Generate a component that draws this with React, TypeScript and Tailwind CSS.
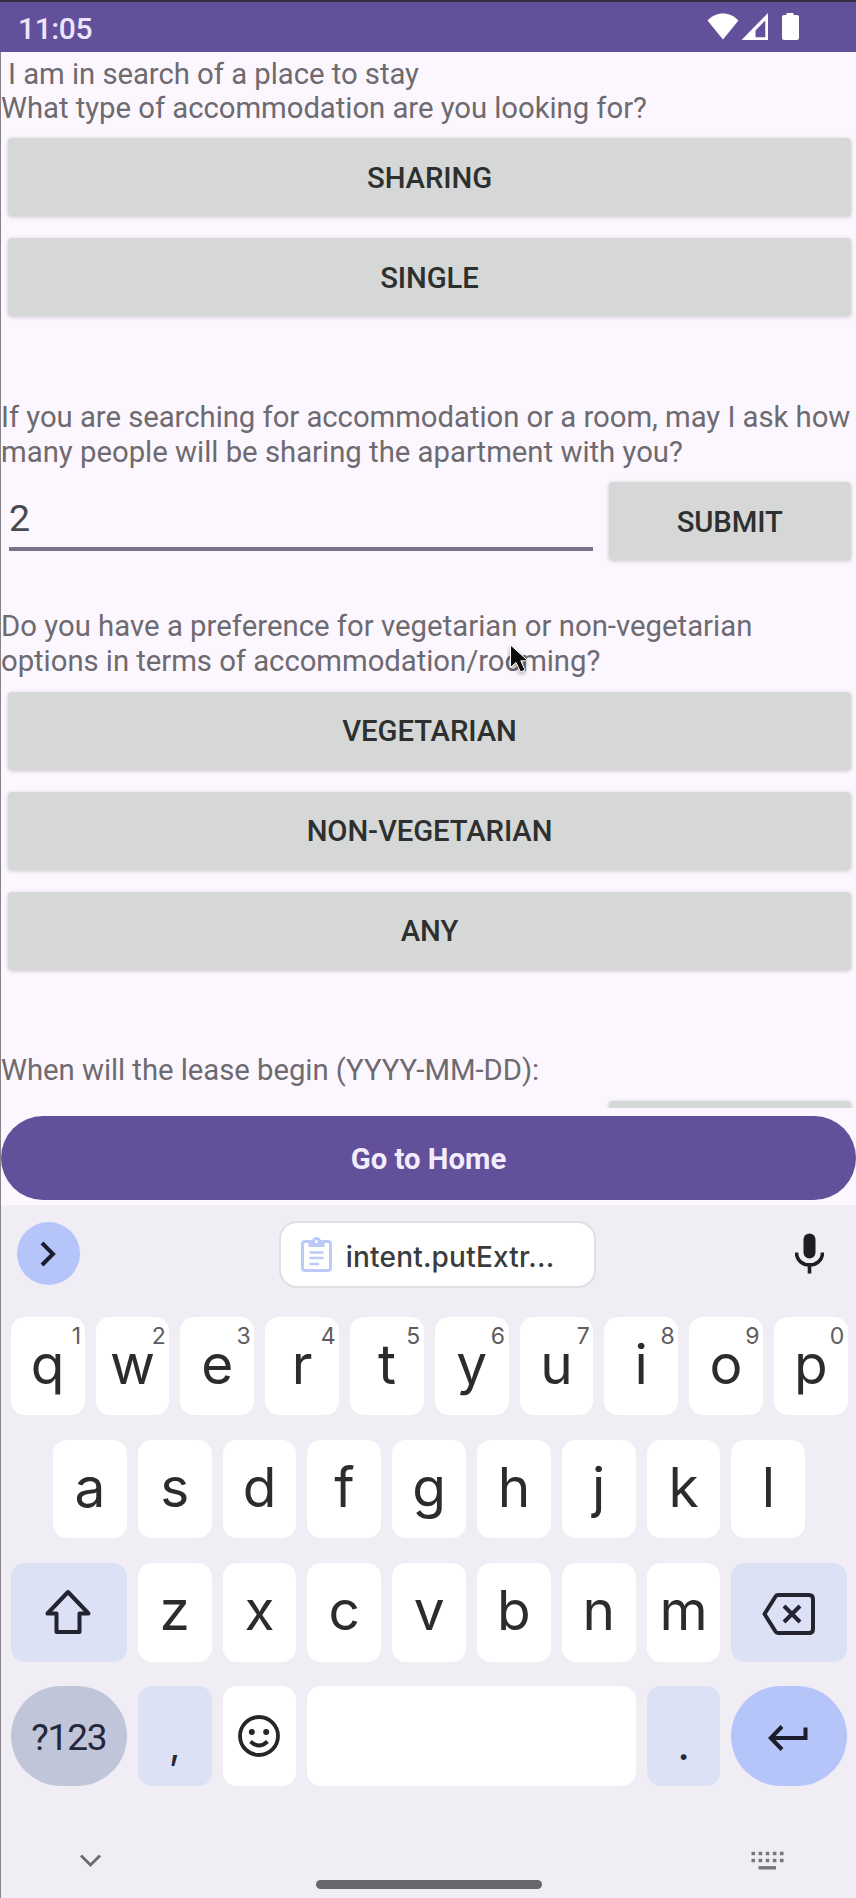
import React from "react";

const prompt =
  "whitespace-nowrap text-[29.3px] leading-[34.3px] tracking-[-0.04px] text-[#6d6a70]";

function FormButton({ label, className = "" }: { label: string; className?: string }) {
  return (
    <button
      className={`flex h-[78px] shrink-0 items-center justify-center rounded-[4px] bg-[#d6d8d7] pt-[3px] text-[29.3px] font-medium tracking-[-0.1px] text-[#2e2f2f] shadow-[0_1px_4px_rgba(0,0,0,0.2)] ${className}`}
    >
      {label}
    </button>
  );
}

function Key({ label, hint }: { label: string; hint?: string }) {
  return (
    <div className="relative flex h-[98.4px] w-[73.8px] shrink-0 justify-center rounded-[14px] bg-white text-[55px] leading-[95px] text-[#2c2c2e]">
      <span>{label}</span>
      {hint && (
        <span className="absolute right-[3.500px] top-[3.500px] text-[23px] leading-[30px] text-[#5d5d60]">
          {hint}
        </span>
      )}
    </div>
  );
}

function StatusBar() {
  return (
    <header className="flex h-[52px] shrink-0 items-center justify-between border-t-2 border-[#332f42] bg-[#62509a] pl-[18px] pr-[57px]">
      <span className="pt-[3.500px] text-[30px] font-medium leading-none tracking-[-0.4px] text-[#ece5fc]">11:05</span>
      <svg width="92" height="30" viewBox="0 0 92 30" fill="#fff">
        <path d="M0.5 8.5C9 -1 23-1 31.5 8.5L16 27.5Z" />
        <path fillRule="evenodd" d="M61 1V28H34.500ZM58.300 8.500L48.500 18.500V25.300H58.300Z" />
        <path d="M79.500 1H86.500V3H90Q92 3 92 5V26Q92 28 90 28H77Q75 28 75 26V5Q75 3 77 3H79.500Z" />
      </svg>
    </header>
  );
}

function Keyboard() {
  return (
    <section className="flex h-[693px] shrink-0 flex-col bg-[#f0eef4] font-[Inter,sans-serif]">
      <div className="flex h-[112px] shrink-0 items-start justify-between pl-[15.500px] pr-[32px] pt-[16px]">
        <div className="mt-[1px] flex h-[63px] w-[63px] items-center justify-center rounded-full bg-[#b6c5f9]">
          <svg width="18" height="26" viewBox="0 0 18 26" fill="none" stroke="#1b1d2c" strokeWidth="4">
            <path d="M3 2L14 13L3 24" />
          </svg>
        </div>
        <div className="flex h-[67px] w-[317px] items-center rounded-[18px] border-2 border-[#e0dfe3] bg-white pl-[20px]">
          <svg width="31" height="36" viewBox="0 0 31 36" fill="none" stroke="#bccaf8" strokeWidth="3">
            <rect x="1.500" y="4.500" width="28" height="29" rx="2.500" />
            <path d="M9 4.500V8.500H22V4.500" fill="#bccaf8" />
            <circle cx="15.500" cy="4.500" r="3" fill="#fff" />
            <path d="M8.500 15.500H22.500M8.500 21H22.500M8.500 27H18" strokeWidth="2.600" />
          </svg>
          <span className="ml-[14px] mt-[4px] text-[28px] font-medium leading-none tracking-[0.200px] text-[#3b3b3d]">intent.putExtr...</span>
        </div>
        <svg className="mt-[12px]" width="29" height="41" viewBox="0 0 29 41">
          <rect x="8.500" y="0.500" width="12" height="25" rx="6" fill="#1e1d22" />
          <path d="M1.500 19.500C1.500 36 27.500 36 27.500 19.500M14.500 31V40.500" fill="none" stroke="#1e1d22" strokeWidth="3.600" />
        </svg>
      </div>

      <div className="flex flex-col items-start gap-[24.7px] pl-[9.800px]">
        <div className="flex gap-[11px]">
          <Key label="q" hint="1" />
          <Key label="w" hint="2" />
          <Key label="e" hint="3" />
          <Key label="r" hint="4" />
          <Key label="t" hint="5" />
          <Key label="y" hint="6" />
          <Key label="u" hint="7" />
          <Key label="i" hint="8" />
          <Key label="o" hint="9" />
          <Key label="p" hint="0" />
        </div>
        <div className="flex gap-[11px] pl-[42.3px]">
          {["a", "s", "d", "f", "g", "h", "j", "k", "l"].map((k) => (
            <Key key={k} label={k} />
          ))}
        </div>
        <div className="flex gap-[11px]">
          <div className="flex h-[98.4px] w-[116px] items-center justify-center rounded-[14px] bg-[#dde1f5]">
            <svg className="mr-[1px]" width="48" height="46" viewBox="0 0 48 46" fill="none" stroke="#23242f" strokeWidth="4" strokeLinejoin="round">
              <path d="M24 3L3.500 24.500H12.500V43H35.500V24.500H44.500Z" />
            </svg>
          </div>
          {["z", "x", "c", "v", "b", "n", "m"].map((k) => (
            <Key key={k} label={k} />
          ))}
          <div className="flex h-[98.4px] w-[116px] items-center justify-center rounded-[14px] bg-[#dde1f5]">
            <svg className="mr-[1px] mt-[4px]" width="53" height="42" viewBox="0 0 53 42" fill="none" stroke="#23242f" strokeWidth="4" strokeLinejoin="round">
              <path d="M16 2H47Q51 2 51 6V36Q51 40 47 40H16Q14.500 40 13.500 38.500L2.500 21L13.500 3.500Q14.500 2 16 2Z" />
              <path d="M22 13L38 29M38 13L22 29" />
            </svg>
          </div>
        </div>
        <div className="flex gap-[11px]">
          <div className="flex h-[99.4px] w-[116px] items-center justify-center rounded-[50px] bg-[#c1c5da] pt-[4px] font-[Roboto,sans-serif] text-[37px] leading-none tracking-[-1.200px] text-[#25273a]">
            ?123
          </div>
          <div className="flex h-[99.4px] w-[73.8px] justify-center rounded-[14px] bg-[#dde1f5] text-[40px] leading-[118px] text-[#262834]">
            ,
          </div>
          <div className="flex h-[99.4px] w-[73.8px] items-center justify-center rounded-[14px] bg-white">
            <svg width="42" height="42" viewBox="0 0 42 42" fill="none" stroke="#262628" strokeWidth="3.800">
              <circle cx="21" cy="21" r="19" />
              <circle cx="13.800" cy="17" r="3" fill="#262628" stroke="none" />
              <circle cx="28.200" cy="17" r="3" fill="#262628" stroke="none" />
              <path d="M12.500 26.500Q21 34.500 29.500 26.500" />
            </svg>
          </div>
          <div className="h-[99.4px] w-[328.200px] rounded-[14px] bg-white" />
          <div className="flex h-[99.4px] w-[73.8px] justify-center rounded-[14px] bg-[#dde1f5] text-[44px] leading-[116px] text-[#262834]">
            .
          </div>
          <div className="flex h-[99.4px] w-[116px] items-center justify-center rounded-[50px] bg-[#b6c5f9]">
            <svg className="mr-[2px] mt-[4px]" width="40" height="26" viewBox="0 0 40 26" fill="none" stroke="#1b1d2c" strokeWidth="4">
              <path d="M14 1.500L2.800 13L14 24.500M2.800 13H37.500V2.500" />
            </svg>
          </div>
        </div>
      </div>

      <footer className="mt-[60px] flex items-start justify-between pl-[79px] pr-[72px]">
        <svg className="mt-[8px]" width="21" height="14" viewBox="0 0 21 14" fill="none" stroke="#6b6a6f" strokeWidth="2.800">
          <path d="M1 1.500L10.500 11L20 1.500" />
        </svg>
        <div className="ml-[6px] mt-[34.500px] h-[9px] w-[226px] rounded-full bg-[#68676b]" />
        <svg className="mt-[5px]" width="33" height="20" viewBox="0 0 33 20" fill="none" stroke="#77767b">
          <path d="M0.500 2.500H33M0.500 9.500H33" strokeWidth="3.600" strokeDasharray="3.600 3.500" />
          <path d="M7.500 16.800H25" strokeWidth="3.400" />
        </svg>
      </footer>
    </section>
  );
}

export default function App() {
  return (
    <div className="relative flex h-[1898px] w-[856px] flex-col overflow-hidden bg-[#fcf7fe] font-[Roboto,sans-serif]">
      <StatusBar />
      <main className="flex h-[1056px] shrink-0 flex-col overflow-hidden border-l border-[#858388] pt-[4.600px]">
        <p className={`${prompt} indent-[7px]`}>I am in search of a place to stay</p>
        <p className={prompt}>What type of accommodation are you looking for?</p>
        <div className="mt-[13px] flex flex-col gap-[22px] pl-[7px] pr-[5px]">
          <FormButton label="SHARING" />
          <FormButton label="SINGLE" />
        </div>
        <p className={`${prompt} mt-[84.200px]`}>
          If you are searching for accommodation or a room, may I ask how
          <br />
          <span className="tracking-normal">many people will be sharing the apartment with you?</span>
        </p>
        <div className="mt-[13.400px] flex pl-[8px] pr-[5px]">
          <div className="h-[68.400px] w-[584px] border-b-4 border-[#7b7385] text-[37.500px] leading-[73px] text-[#4a484d]">
            2
          </div>
          <FormButton label="SUBMIT" className="ml-[15.500px] w-[242.500px]" />
        </div>
        <p className={`${prompt} mt-[49px]`}>
          <span className="tracking-[0.020px]">Do you have a preference for vegetarian or non-vegetarian</span>
          <br />
          options in terms of accommodation/rooming?
        </p>
        <div className="mt-[13.600px] flex flex-col gap-[22.200px] pl-[7px] pr-[5px]">
          <FormButton label="VEGETARIAN" />
          <FormButton label="NON-VEGETARIAN" />
          <FormButton label="ANY" />
        </div>
        <p className={`${prompt} mt-[83.300px]`}>When will the lease begin (YYYY-MM-DD):</p>
        <FormButton label="" className="ml-[607.500px] mt-[13.600px] w-[242.500px]" />
      </main>
      <div className="h-[97px] shrink-0 border-l border-[#858388] pt-[8px]">
        <button className="flex h-[84px] w-full items-center justify-center rounded-full bg-[#62509a] pt-[3px] text-[29.300px] font-bold text-[#f3ecfd]">
          Go to Home
        </button>
      </div>
      <div className="border-l border-[#858388]">
        <Keyboard />
      </div>
      <svg className="absolute left-[508px] top-[642px] drop-shadow-[0_2px_2px_rgba(0,0,0,0.35)]" width="24" height="36" viewBox="0 0 24 36">
        <path d="M2.500 3V25.500L8 20.500L12.500 30L17 28L12.800 18.800H20Z" fill="#0c0c0d" stroke="#fff" strokeWidth="1" />
      </svg>
    </div>
  );
}
